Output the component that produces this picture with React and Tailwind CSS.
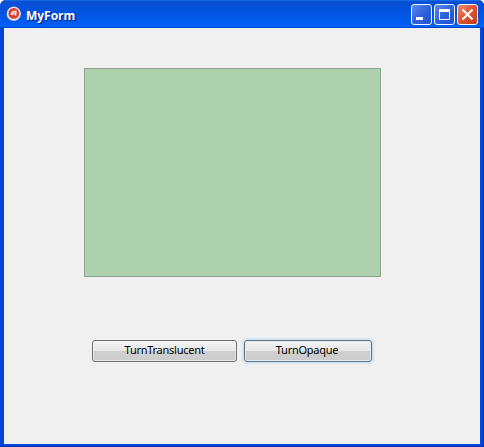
function FormIcon() {
  return (
    <svg width="16" height="16" viewBox="0 0 16 16" className="shrink-0">
      <circle cx="7.8" cy="7.8" r="7.2" fill="#b4bfdc" />
      <circle cx="7.8" cy="7.6" r="6.6" fill="#f1e6e6" />
      <circle cx="7.8" cy="7.4" r="5.4" fill="#d5402f" />
      <path d="M4.4 8.4C5 6.4 6.4 5 8.2 4.8H10.8L10.2 9.8H8.8L9 8.4H7.2L6.4 9.2Z" fill="#fbe9e6" />
      <path d="M7 7.4 9.2 6 8.8 7.4Z" fill="#d5402f" />
    </svg>
  )
}

function CaptionButton({ label, close, children }) {
  return (
    <button
      aria-label={label}
      className={`h-[21px] w-[21px] rounded-[3px] border border-[#f4f6ff] ${
        close
          ? 'bg-linear-to-br from-[#e98a6c] via-[#dc5430] to-[#c23a16]'
          : 'bg-linear-to-br from-[#5d8bf0] via-[#2f63dc] to-[#1d51d0]'
      }`}
    >
      <svg width="19" height="19" viewBox="0 0 19 19" fill="none">
        {children}
      </svg>
    </button>
  )
}

function TitleBar() {
  return (
    <header className="flex h-7 items-start bg-linear-to-b from-[#0a4fd0] via-[#0054e3] to-[#0062f8] px-[6px] pt-1 shadow-[inset_0_1px_0_#1668e8,inset_0_-1px_0_#0046d2]">
      <div className="mt-[2px]">
        <FormIcon />
      </div>
      <h1 className="ml-1 flex-1 origin-left scale-x-[0.92] pt-[2px] font-['Open_Sans','Noto_Sans',sans-serif] text-[13px] leading-[18px] font-bold text-white [text-shadow:1px_1px_1px_#0a1883]">
        MyForm
      </h1>
      <div className="flex gap-[2px]">
        <CaptionButton label="Minimize">
          <path d="M4 13.5h7" stroke="#fff" strokeWidth="3" />
        </CaptionButton>
        <CaptionButton label="Maximize">
          <path d="M4.5 4v10.5h10V4" stroke="#fff" />
          <path d="M4 5.5h11" stroke="#fff" strokeWidth="3" />
        </CaptionButton>
        <CaptionButton label="Close" close>
          <path d="m4.5 4.5 10 10m0-10-10 10" stroke="#fff" strokeWidth="2.1" />
        </CaptionButton>
      </div>
    </header>
  )
}

function FormButton({ className, children }) {
  return (
    <button
      className={`h-[22px] rounded-[3px] border bg-[linear-gradient(#f3f3f3,#e8e8e8_48%,#cfcfcf_52%,#cdcdcd)] pb-[2px] font-['Noto_Sans','Open_Sans',sans-serif] text-[11px] leading-[18px] tracking-[-0.26px] text-black ${className}`}
    >
      {children}
    </button>
  )
}

export default function App() {
  return (
    <div className="flex h-[447px] w-[484px] flex-col overflow-hidden rounded-t-[6px] bg-[#0046dc] shadow-[inset_-1px_-1px_0_#0030b0]">
      <TitleBar />
      <main className="mr-1 mb-[3px] ml-1 flex-1 bg-[#f0f0f0] pt-10 pl-20">
        <div className="h-[209px] w-[297px] border border-[#8fa592] bg-[#add1ad]" />
        <div className="mt-[63px] ml-2 flex gap-[7px]">
          <FormButton className="w-[145px] border-[#707070] shadow-[inset_0_0_0_1px_#f4f4f4aa]">
            TurnTranslucent
          </FormButton>
          <FormButton className="w-32 border-[#66747f] pr-[2px] shadow-[0_0_3px_1px_#b9d6ee,inset_0_0_0_1px_#e0ebf3]">
            TurnOpaque
          </FormButton>
        </div>
      </main>
    </div>
  )
}
